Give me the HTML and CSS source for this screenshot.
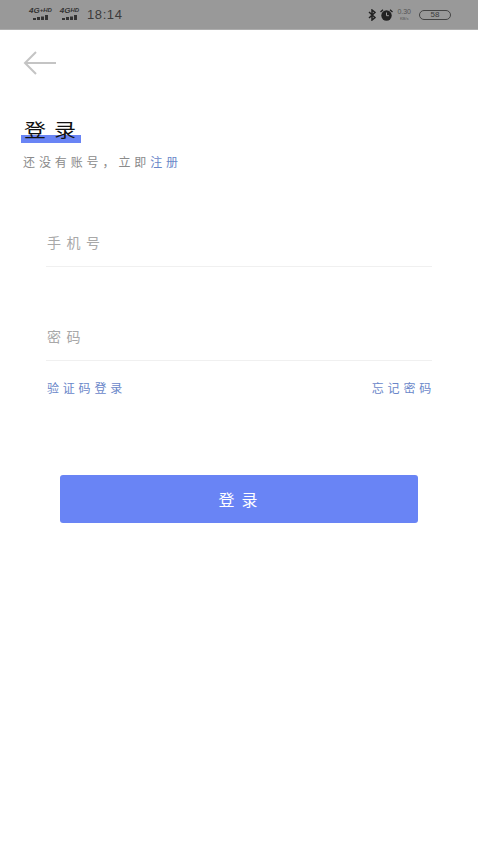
FILE: index.html
```html
<!DOCTYPE html>
<html lang="zh-CN">
<head>
    <meta charset="UTF-8">
    <meta name="viewport" content="width=device-width, initial-scale=1.0">
    <title>登录</title>
    <link rel="stylesheet" href="styles.css">
</head>
<body>
    <div class="status-bar">
        <div class="status-left">
            <div class="signal">
                <span class="signal-label">4G<sup>+HD</sup></span>
                <svg class="signal-bars" width="16" height="5" viewBox="0 0 16 5"><path d="M0 3h3v2H0zM4 2h3v3H4zM8 1.500h3V5H8zM12 0h3v5h-3z" fill="#333"/></svg>
            </div>
            <div class="signal">
                <span class="signal-label">4G<sup>HD</sup></span>
                <svg class="signal-bars" width="16" height="5" viewBox="0 0 16 5"><path d="M0 3h3v2H0zM4 2h3v3H4zM8 1.500h3V5H8zM12 0h3v5h-3z" fill="#333"/></svg>
            </div>
            <span class="clock">18:14</span>
        </div>
        <div class="status-right">
            <svg class="bt-icon" width="8" height="12" viewBox="0 0 8 12"><path d="M1 3l6 5.500L4 11V1l3 2.500L1 9" fill="none" stroke="#222" stroke-width="1.500"/></svg>
            <svg class="alarm-icon" width="13" height="12" viewBox="0 0 13 12"><circle cx="6.500" cy="6.500" r="5.200" fill="#222"/><path d="M6.500 3.500v3.200h2.400" fill="none" stroke="#999" stroke-width="1"/><path d="M0.500 3L3 0.800M12.500 3L10 0.800" stroke="#222" stroke-width="1.400"/></svg>
            <div class="speed">
                <span>0.30</span>
                <span class="speed-unit">KB/s</span>
            </div>
            <div class="battery">58</div>
        </div>
    </div>

    <div class="page">
        <svg class="back" width="34" height="26" viewBox="0 0 34 26"><path d="M33 13H2M13 2L2 13l11 11" fill="none" stroke="#c4c4c4" stroke-width="2"/></svg>

        <div class="title-wrap">
            <h1 class="title">登录</h1>
        </div>
        <p class="hint">还没有账号，立即<a class="link">注册</a></p>

        <form class="login-form">
            <div class="field field-phone">手机号</div>
            <div class="field field-password">密码</div>
            <div class="links">
                <a class="link">验证码登录</a>
                <a class="link">忘记密码</a>
            </div>
            <button type="button" class="submit">登录</button>
        </form>
    </div>
</body>
</html>
```

FILE: styles.css
```css
body {
    margin: 0;
    background: #fff;
    font-family: "Liberation Sans", "Noto Sans CJK SC", sans-serif;
    color: #999;
}
.status-bar {
    height: 29px;
    background: #999;
    border-bottom: 1px solid #adadad;
    display: flex;
    justify-content: space-between;
    align-items: center;
    padding: 0 27px 0 28px;
    color: #333;
}
.status-left, .status-right {
    display: flex;
    align-items: center;
}
.signal {
    display: flex;
    flex-direction: column;
    align-items: center;
    width: 25px;
    margin-right: 4px;
    margin-top: -3px;
}
.signal-label {
    font-size: 8px;
    font-weight: bold;
    font-style: italic;
    line-height: 8px;
    white-space: nowrap;
}
.signal-label sup {
    font-size: 6px;
    line-height: 0;
    vertical-align: 1px;
}
.signal-bars {
    display: block;
    margin-top: 0;
}
.clock {
    font-size: 13px;
    letter-spacing: 0.6px;
    margin-left: 1px;
    color: #3c3c3c;
}
.bt-icon {
    margin-right: 4px;
}
.alarm-icon {
    margin-right: 4px;
}
.speed {
    display: flex;
    flex-direction: column;
    align-items: center;
    font-size: 7px;
    line-height: 7px;
    margin-right: 8px;
    color: #555;
}
.speed-unit {
    font-size: 4px;
}
.battery {
    width: 30px;
    height: 8px;
    border: 1px solid #444;
    border-radius: 5px;
    font-size: 8px;
    line-height: 8px;
    text-align: center;
    color: #3c3c3c;
}
.page {
    padding: 0 46px 0 0;
}
.back {
    display: block;
    margin: 20px 0 0 23px;
}
.title-wrap {
    margin: 41px 0 0 21px;
    width: 60px;
    height: 26px;
    background: linear-gradient(#fff 0, #fff 18px, #6984f5 18px, #6984f5 100%);
    text-align: center;
}
.title {
    margin: 0 -8px 0 -2px;
    padding-top: 3px;
    font-size: 22px;
    font-weight: normal;
    line-height: 22px;
    letter-spacing: 8px;
    color: #111;
    transform: scaleY(0.85);
}
.hint {
    margin: 12px 0 0 23px;
    font-size: 12px;
    line-height: 16px;
    letter-spacing: 3.9px;
    color: #8a8a8a;
}
.link {
    color: #6a87c9;
}
.login-form {
    margin-left: 46px;
}
.field {
    height: 33px;
    border-bottom: 1px solid #f0f0f0;
    font-size: 14px;
    letter-spacing: 5.5px;
    color: #a8a8a8;
    line-height: 20px;
    padding-left: 1px;
}
.field-phone {
    margin-top: 62px;
}
.field-password {
    margin-top: 60px;
}
.links {
    display: flex;
    justify-content: space-between;
    margin-top: 20px;
    padding-left: 1px;
    font-size: 12px;
    line-height: 16px;
    letter-spacing: 3.8px;
}
.links .link:last-child {
    margin-right: -3px;
}
.submit {
    display: block;
    width: 358px;
    height: 48px;
    margin: 78px 0 0 14px;
    border: none;
    border-radius: 3px;
    background: #6984f5;
    color: #fff;
    font-family: inherit;
    font-size: 16px;
    letter-spacing: 7px;
    padding: 0 0 0 5px;
}
```
